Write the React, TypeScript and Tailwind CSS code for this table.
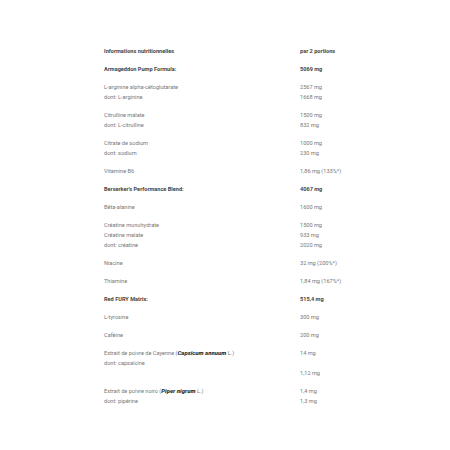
import {FC, ReactNode} from "react";

type Row = {
	left: ReactNode[];
	right: ReactNode[];
	bold?: boolean;
};

const ROWS: Row[] = [
	{left: ["Informations nutritionnelles"], right: ["par 2 portions"], bold: true},
	{left: ["Armageddon Pump Formula:"], right: ["5069 mg"], bold: true},
	{
		left: ["L-arginine alpha-cétoglutarate", "dont: L-arginine"],
		right: ["2567 mg", "1668 mg"],
	},
	{left: ["Citrulline malate", "dont: L-citrulline"], right: ["1500 mg", "832 mg"]},
	{left: ["Citrate de sodium", "dont: sodium"], right: ["1000 mg", "230 mg"]},
	{left: ["Vitamine B6"], right: ["1,86 mg (133%*)"]},
	{left: ["Berserker's Performance Blend:"], right: ["4067 mg"], bold: true},
	{left: ["Bêta-alanine"], right: ["1600 mg"]},
	{
		left: ["Créatine monohydrate", "Créatine malate", "dont: créatine"],
		right: ["1500 mg", "933 mg", "2020 mg"],
	},
	{left: ["Niacine"], right: ["32 mg (200%*)"]},
	{left: ["Thiamine"], right: ["1,84 mg (167%*)"]},
	{left: ["Red FURY Matrix:"], right: ["515,4 mg"], bold: true},
	{left: ["L-tyrosine"], right: ["300 mg"]},
	{left: ["Caféine"], right: ["200 mg"]},
	{
		left: [
			<>
				Extrait de poivre de Cayenne (
				<b className="italic font-black text-[6px] text-[#333]">Capsicum annuum</b> L.)
			</>,
			"dont: capsaïcine",
		],
		right: ["14 mg", "\u00a0", "1,12 mg"],
	},
	{
		left: [
			<>
				Extrait de poivre noiro (
				<b className="italic font-black text-[6px] text-[#333]">Piper nigrum</b> L.)
			</>,
			"dont: pipérine",
		],
		right: ["1,4 mg", "1,3 mg"],
	},
];

const App: FC = () => {
	return (
		<div
			className="w-[450px] h-[450px] bg-white pt-[42px] pl-[104px]"
			style={{fontFamily: "Roboto, 'Liberation Sans', sans-serif"}}
		>
			<div className="w-[250px] text-[5.6px] leading-[10px] text-[#777]">
				{ROWS.map((row, i) => (
					<div
						key={i}
						className={`grid grid-cols-[196px_1fr] py-[4px] ${
							row.bold ? "font-bold text-[#444]" : ""
						}`}
					>
						<div className="flex flex-col">
							{row.left.map((t, j) => (
								<span key={j}>{t}</span>
							))}
						</div>
						<div className="flex flex-col">
							{row.right.map((t, j) => (
								<span key={j}>{t}</span>
							))}
						</div>
					</div>
				))}
			</div>
		</div>
	);
};

export default App;
